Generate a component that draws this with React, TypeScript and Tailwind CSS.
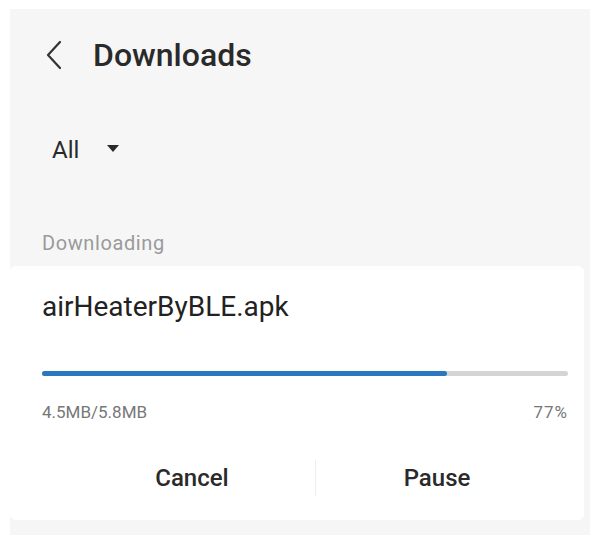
import React from "react";

export default function App() {
  return (
    <div className="w-[598px] h-[542px] bg-white pt-[9px] pl-[10px] pr-[8px] pb-[7px]" style={{ fontFamily: "Roboto, 'Noto Sans', sans-serif" }}>
      <div className="h-full bg-[#f6f6f6] flex flex-col">
        <div className="flex items-center h-[40px] mt-[26px] pl-[35px]">
          <svg width="18" height="30" viewBox="0 0 18 30" className="text-[#333]">
            <path d="M15 2 L3 15 L15 28" fill="none" stroke="currentColor" strokeWidth="2.2" strokeLinecap="round" strokeLinejoin="round" />
          </svg>
          <span className="ml-[30px] text-[32px] leading-[40px] font-medium text-[#2a2a2a]">Downloads</span>
        </div>
        <div className="flex items-center h-[40px] mt-[55px] pl-[42px]">
          <span className="text-[24px] text-[#2a2a2a]">All</span>
          <svg width="14" height="9" viewBox="0 0 14 9" className="ml-[27px] mb-[3px]">
            <path d="M1 1 L13 1 L7 8 Z" fill="#2a2a2a" />
          </svg>
        </div>
        <div className="mt-[60px] pl-[32px] text-[20px] leading-[26px] text-[#9a9a9a] tracking-[0.6px]">Downloading</div>
        <div className="mt-[10px] mr-[6px] bg-white rounded-[6px] flex flex-col pl-[32px] pr-[16px]">
          <div className="mt-[24px] text-[28px] text-[#222] leading-[34px]">airHeaterByBLE.apk</div>
          <div className="mt-[47px] h-[5px] rounded-full bg-[#d4d4d4] flex">
            <div className="h-full rounded-full bg-[#2a77c0]" style={{ width: "77%" }} />
          </div>
          <div className="mt-[25px] flex justify-between text-[17px] text-[#777] leading-[22px]">
            <span>4.5MB/5.8MB</span>
            <span className="tracking-[1px]">77%</span>
          </div>
          <div className="mt-[37px] mb-[24px] flex items-center -ml-[32px] -mr-[16px]">
            <div className="w-[305px] text-center text-[24px] leading-[36px] font-medium text-[#2a2a2a] pl-[59px]">Cancel</div>
            <div className="w-px h-[36px] bg-[#eeeeee]" />
            <div className="flex-1 text-center text-[24px] leading-[36px] font-medium text-[#2a2a2a] pr-[26px]">Pause</div>
          </div>
        </div>
      </div>
    </div>
  );
}
